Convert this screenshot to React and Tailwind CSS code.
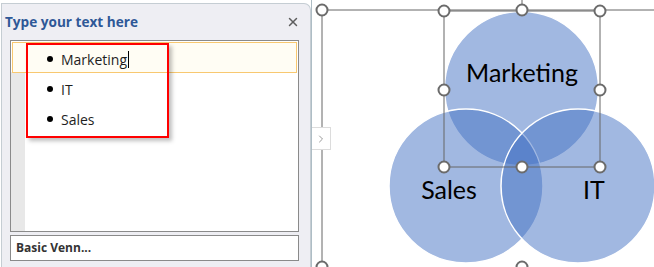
import { X, ChevronRight } from "lucide-react";

const items = ["Marketing", "IT", "Sales"];

const handles = [
  [10, 10], [210, 10],
  [132, 11], [288, 11],
  [132, 90], [288, 90],
  [132, 167], [210, 167], [288, 167],
  [10, 267], [210, 267],
];

const TextPane = () => {
  return (
    <div className="relative h-full w-[311px] shrink-0 pt-[3px] pl-px">
      <div className="flex h-full flex-col rounded-tr-[7px] border-t border-r border-l border-[#c5cdd3] bg-[#eeeef3] pr-[11px] pl-[8px]">
        <div className="flex h-[36px] items-center justify-between">
          <span className="-ml-[5px] pt-[1px] font-['Open_Sans'] text-[13.6px] font-bold text-[#2e5897]">
            Type your text here
          </span>
          <X className="mr-[-1px] h-[14px] w-[14px] text-[#5e5e5e]" strokeWidth={2.5} />
        </div>

        <div className="relative flex h-[192px] flex-col border border-[#8a8a8a] bg-white">
          <div className="absolute top-[31px] bottom-0 left-0 w-[14px] bg-[#e8e8e8]" />
          <div className="relative mx-px mt-px h-[31px] border border-[#f8c870] bg-[#fffdf4]" />

          <div className="absolute top-[2px] left-[15px] h-[95px] w-[143px] border-2 border-[#ff0000] shadow-[3px_3px_4px_rgba(0,0,0,0.25)]" />

          <ul className="absolute top-[3px] left-[36px] flex flex-col font-['Open_Sans'] text-[14px] text-[#1e1e1e]">
            {items.map((item, i) => (
              <li key={item} className="flex h-[30px] items-center">
                <span className="mr-[8px] h-[6px] w-[6px] rounded-full bg-black" />
                <span>{item}</span>
                {i === 0 && <span className="ml-px h-[17px] w-px bg-black" />}
              </li>
            ))}
          </ul>
        </div>

        <div className="mt-[3px] flex h-[26px] items-center border border-[#8a8a8a] bg-white pl-[5px] font-['Open_Sans'] text-[12px] font-bold text-[#333]">
          Basic Venn...
        </div>
      </div>
    </div>
  );
};

const Canvas = () => {
  return (
    <div className="relative h-full flex-1 border-l border-[#aebdc5] bg-white">
      <svg width="343" height="267" className="block">
        <line x1="210" y1="0" x2="210" y2="10" stroke="#666" strokeWidth="1" />
        <line x1="10" y1="10" x2="343" y2="10" stroke="#666" strokeWidth="1" />
        <line x1="10" y1="10" x2="10" y2="267" stroke="#666" strokeWidth="1" />

        <g fill="#4472c4" fillOpacity="0.5" stroke="#fff" strokeWidth="1.5">
          <circle cx="209.5" cy="88.5" r="77" />
          <circle cx="154" cy="186" r="77" />
          <circle cx="266" cy="186" r="77" />
        </g>

        <g fontFamily="Lato, 'Open Sans', sans-serif" fontSize="25" fill="#000">
          <text x="210" y="82" textAnchor="middle">Marketing</text>
          <text x="137" y="199" textAnchor="middle">Sales</text>
          <text x="282" y="199" textAnchor="middle">IT</text>
        </g>

        <rect x="132" y="11" width="156" height="156" fill="none" stroke="#666" strokeWidth="1" />

        {handles.map(([x, y]) => (
          <circle key={`${x}-${y}`} cx={x} cy={y} r="5.5" fill="#fff" stroke="#6b6b6b" strokeWidth="2" />
        ))}
      </svg>

      <div className="absolute top-[127px] left-0 flex h-[23px] w-[19px] items-center justify-center border border-l-0 border-[#dcdcdc] bg-white">
        <ChevronRight className="h-[12px] w-[12px] text-[#9a9a9a]" strokeWidth={2} />
      </div>
    </div>
  );
};

export default function App() {
  return (
    <div className="flex h-[267px] w-[654px] overflow-hidden bg-white">
      <TextPane />
      <Canvas />
    </div>
  );
}
